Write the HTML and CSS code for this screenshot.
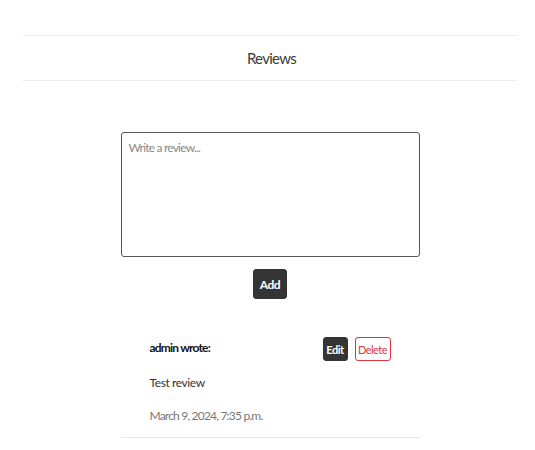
FILE: index.html
```html
<!DOCTYPE html>
<html>
<head>
<meta charset="utf-8">
<link rel="stylesheet" href="styles.css">
</head>
<body>
<div class="page">
  <div class="section-title">Reviews</div>
  <form class="review-form">
    <textarea class="review-input" placeholder="Write a review..."></textarea>
    <button type="button" class="btn btn-dark btn-add">Add</button>
  </form>
  <div class="review">
    <div class="review-head">
      <span class="author">admin wrote:</span>
      <div class="actions">
        <button type="button" class="btn btn-dark btn-small">Edit</button>
        <button type="button" class="btn btn-outline-danger btn-small">Delete</button>
      </div>
    </div>
    <p class="review-text">Test review</p>
    <p class="review-date">March 9, 2024, 7:35 p.m.</p>
  </div>
</div>
</body>
</html>
```
FILE: styles.css
```css
* { box-sizing: border-box; }
body {
  margin: 0;
  background: #fff;
  font-family: Lato, "Noto Sans", sans-serif;
  color: #212529;
}
.page {
  margin: 35px 18px 0 23px;
  display: flex;
  flex-direction: column;
  align-items: center;
}
.section-title {
  align-self: stretch;
  height: 46px;
  border-top: 1px solid #ececec;
  border-bottom: 1px solid #ececec;
  display: flex;
  align-items: center;
  justify-content: center;
  font-size: 15px;
  letter-spacing: -0.7px;
  color: #3a3a3a;
  padding-left: 3px;
}
.review-form {
  margin-top: 51px;
  display: flex;
  flex-direction: column;
  align-items: center;
}
.review-input {
  width: 299px;
  height: 125px;
  border: 1px solid #555;
  border-radius: 3px;
  padding: 7px 7px;
  font-family: Lato, sans-serif;
  font-size: 12px;
  letter-spacing: -0.8px;
  resize: none;
  display: block;
}
.review-input::placeholder { color: #8a8a8a; }
.btn {
  font-family: Lato, sans-serif;
  border-radius: 3px;
  padding: 0;
  letter-spacing: -0.5px;
}
.btn-dark {
  background: #343434;
  border: 1px solid #343434;
  color: #fff;
}
.btn-add {
  margin-top: 12px;
  width: 34px;
  height: 30px;
  font-size: 12px;
  font-weight: 700;
}
.review {
  width: 299px;
  margin-top: 38px;
  padding: 0 29px 14px;
  border-bottom: 1px solid #e6e6e6;
}
.review-head {
  display: flex;
  justify-content: space-between;
  align-items: center;
}
.author {
  font-size: 12px;
  font-weight: 700;
  letter-spacing: -0.8px;
  color: #111;
  margin-top: -4px;
}
.actions {
  display: flex;
  gap: 7px;
}
.btn-small {
  height: 24px;
  font-size: 11px;
}
.btn-dark.btn-small { width: 25px; font-weight: 700; }
.btn-outline-danger {
  width: 36px;
  background: #fff;
  border: 1px solid #dc3545;
  color: #dc3545;
}
.review-text {
  margin: 14px 0 0;
  font-size: 12px;
  letter-spacing: -0.4px;
  color: #333;
}
.review-date {
  margin: 18px 0 0;
  font-size: 12px;
  letter-spacing: -0.8px;
  color: #777;
}
```
